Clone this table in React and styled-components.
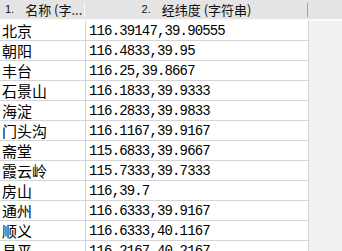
import React from "react";
import styled, { createGlobalStyle } from "styled-components";

const Global = createGlobalStyle`
  html, body { margin: 0; padding: 0; }
  body { background: #f1f1f3; }
`;

const Page = styled.div`
  width: 342px;
  height: 251px;
  overflow: hidden;
  background: #f1f1f3;
  position: relative;
`;

const Header = styled.div`
  display: grid;
  grid-template-columns: 85px 223px 1fr;
  height: 19px;
  background: #e4e4e4;
  border-bottom: 2px solid #fbfbfb;
  font-family: "Noto Sans CJK SC", "Noto Sans", sans-serif;
  font-size: 13px;
  color: #111;
`;

const HeadCell = styled.div`
  display: flex;
  align-items: center;
  justify-content: ${(p) => (p.$center ? "center" : "flex-start")};
  padding-left: ${(p) => (p.$center ? "0" : "5px")};
  white-space: nowrap;
  overflow: hidden;
  position: relative;
  line-height: 19px;
  &::after {
    content: "";
    position: absolute;
    right: 0;
    top: 3px;
    bottom: 2px;
    width: 1px;
    background: ${(p) => p.$sep};
  }
`;

const Num = styled.span`
  margin-right: 11px;
  font-family: "Liberation Sans", sans-serif;
  font-size: 11px;
`;

const Body = styled.div`
  display: grid;
  grid-template-columns: 86px 223px;
  width: 309px;
  background: #fff;
`;

const Cell = styled.div`
  height: 19px;
  border-bottom: 1px solid #d4d4d4;
  border-right: 1px solid #d4d4d4;
  display: flex;
  align-items: center;
  padding-left: ${(p) => (p.$num ? "3px" : "2px")};
  white-space: nowrap;
  overflow: hidden;
  color: #000;
  font-family: ${(p) =>
    p.$num ? '"Liberation Mono", monospace' : '"Noto Sans CJK SC", sans-serif'};
  font-size: ${(p) => (p.$num ? "14px" : "15px")};
  letter-spacing: ${(p) => (p.$num ? "-0.85px" : "0")};
`;

const rows = [
  ["北京", "116.39147,39.90555"],
  ["朝阳", "116.4833,39.95"],
  ["丰台", "116.25,39.8667"],
  ["石景山", "116.1833,39.9333"],
  ["海淀", "116.2833,39.9833"],
  ["门头沟", "116.1167,39.9167"],
  ["斋堂", "115.6833,39.9667"],
  ["霞云岭", "115.7333,39.7333"],
  ["房山", "116,39.7"],
  ["通州", "116.6333,39.9167"],
  ["顺义", "116.6333,40.1167"],
  ["昌平", "116.2167,40.2167"],
];

export default function App() {
  return (
    <Page>
      <Global />
      <Header>
        <HeadCell $sep="#fafafa">
          <Num>1.</Num>名称 (字...
        </HeadCell>
        <HeadCell $center $sep="#a0a0a0">
          <Num>2.</Num>经纬度 (字符串)
        </HeadCell>
        <div />
      </Header>
      <Body>
        {rows.map(([n, v]) => (
          <React.Fragment key={n}>
            <Cell>{n}</Cell>
            <Cell $num>{v}</Cell>
          </React.Fragment>
        ))}
      </Body>
    </Page>
  );
}
